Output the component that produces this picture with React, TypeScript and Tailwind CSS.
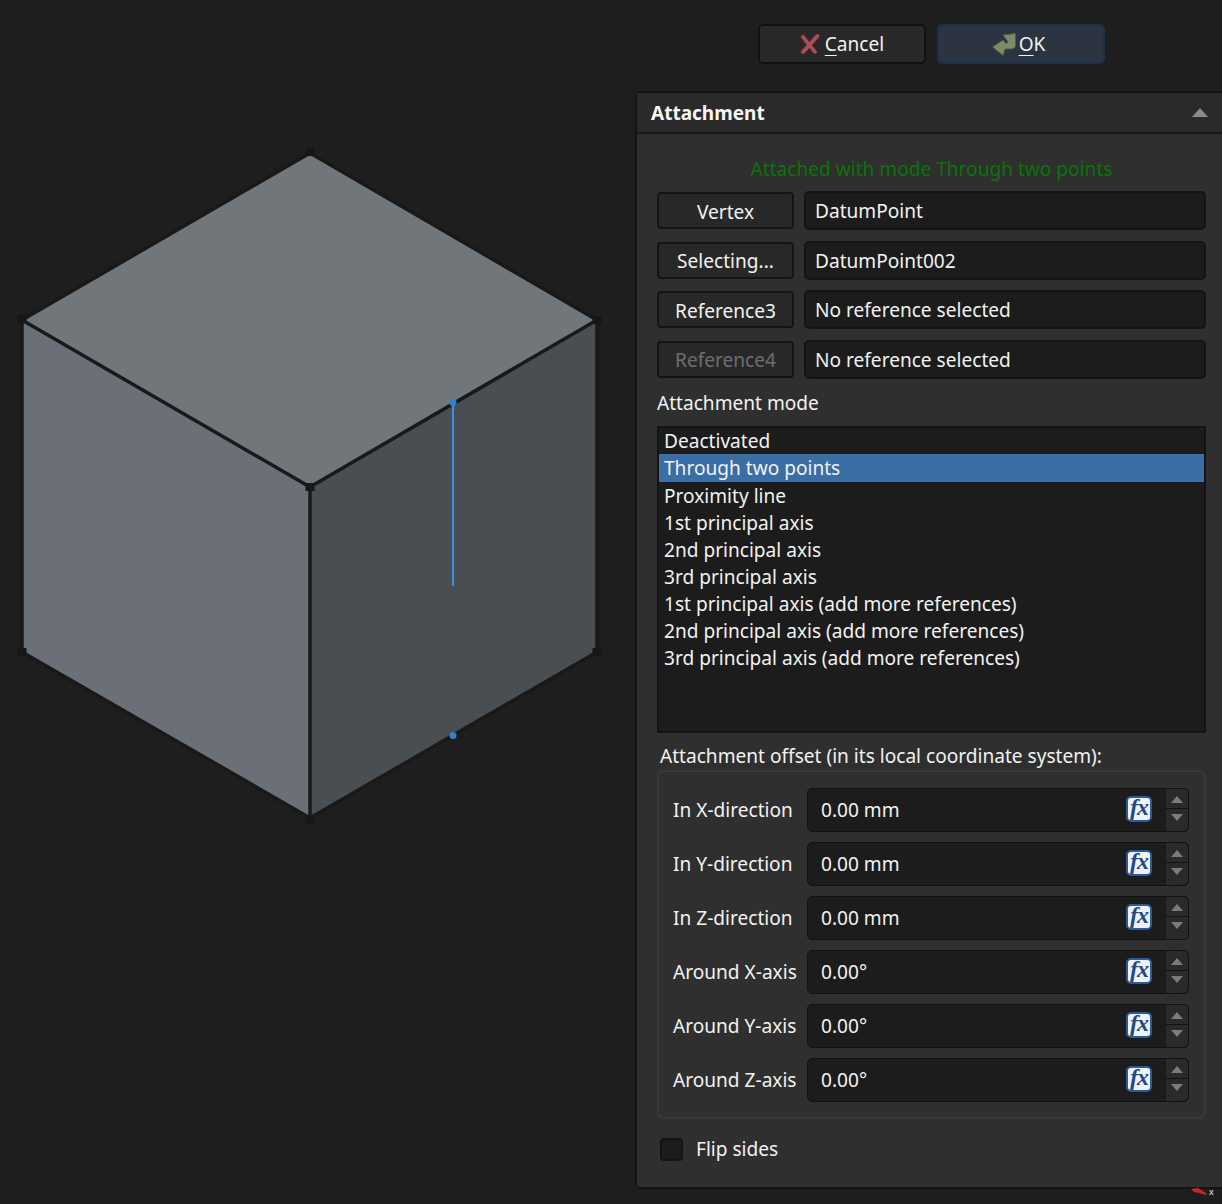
import React from 'react';

const font = { fontFamily: '"Noto Sans", sans-serif' };

const refs = [
  { label: 'Vertex', value: 'DatumPoint' },
  { label: 'Selecting...', value: 'DatumPoint002' },
  { label: 'Reference3', value: 'No reference selected' },
  { label: 'Reference4', value: 'No reference selected', disabled: true },
];

const modes = [
  'Deactivated',
  'Through two points',
  'Proximity line',
  '1st principal axis',
  '2nd principal axis',
  '3rd principal axis',
  '1st principal axis (add more references)',
  '2nd principal axis (add more references)',
  '3rd principal axis (add more references)',
];

const offsets = [
  { label: 'In X-direction', value: '0.00 mm' },
  { label: 'In Y-direction', value: '0.00 mm' },
  { label: 'In Z-direction', value: '0.00 mm' },
  { label: 'Around X-axis', value: '0.00°' },
  { label: 'Around Y-axis', value: '0.00°' },
  { label: 'Around Z-axis', value: '0.00°' },
];

const corners = [
  [310, 152], [597, 320], [22, 319], [310, 487], [310, 820], [22, 652], [597, 652],
];

function Cube() {
  return (
    <svg width="635" height="1204" viewBox="0 0 635 1204" className="block">
      <polygon points="310,153 597,320 310,487 22,320" fill="#70767a" />
      <polygon points="22,320 310,487 310,818 22,652" fill="#6a6f78" />
      <polygon points="310,487 597,320 597,652 310,818" fill="#494e53" />
      <g stroke="#191919" strokeWidth="3.5" fill="none">
        <polygon points="310,153 597,320 597,652 310,818 22,652 22,320" />
        <line x1="22" y1="320" x2="310" y2="487" />
        <line x1="310" y1="487" x2="597" y2="320" />
        <line x1="310" y1="487" x2="310" y2="818" />
      </g>
      {corners.map(([x, y]) => (
        <rect key={`${x}-${y}`} x={x - 4.5} y={y - 4} width="9" height="8" fill="#171717" />
      ))}
      <line x1="453" y1="403" x2="453" y2="586" stroke="#3d8fe6" strokeWidth="2" />
      <circle cx="453" cy="402.5" r="3.5" fill="#2f80d0" />
      <circle cx="453" cy="735.5" r="3.5" fill="#2f80d0" />
    </svg>
  );
}

function CancelIcon() {
  return (
    <svg width="20" height="20" viewBox="0 0 20 20" className="shrink-0">
      <g fill="none" strokeLinecap="round">
        <path d="M3 3 L15 18 M17.5 2 L3 18" stroke="#5e2b33" strokeWidth="5" />
        <path d="M3 3 L15 18 M17.5 2 L3 18" stroke="#a8505c" strokeWidth="3.4" />
      </g>
    </svg>
  );
}

function OkIcon() {
  return (
    <svg width="24" height="23" viewBox="0 0 24 23" className="shrink-0">
      <path d="M11 2 L23.5 0.5 V12 Q23.5 16 19 16 H13 L11 22.5 L0.5 14 L11 7 L14 10.5 L16 9 Z" fill="#7b8c66" stroke="#515c45" strokeWidth="1" strokeLinejoin="round" />
    </svg>
  );
}

function FxIcon() {
  return (
    <div className="w-[26px] h-[26px] -mt-[2px] rounded-[5px] border-2 border-[#2c5a9c] bg-[#eef1f6] flex items-center justify-center">
      <span className="text-[#1f4a85] text-[24px] font-bold italic leading-none tracking-[-1px] -mt-[3px]" style={{ fontFamily: '"Liberation Serif", serif' }}>
        fx
      </span>
    </div>
  );
}

function Arrow({ down }: { down?: boolean }) {
  return (
    <svg width="12" height="7" viewBox="0 0 12 7">
      <polygon points={down ? '0,0 12,0 6,7' : '6,0 12,7 0,7'} fill="#7b7b7b" />
    </svg>
  );
}

function OffsetRow({ label, value }: { label: string; value: string }) {
  return (
    <div className="flex items-center h-[44px] mb-[10px] last:mb-0">
      <div className="w-[134px] text-[19.1px] leading-none text-[#f2f2f2] mt-[2px]">{label}</div>
      <div className="w-[382px] h-full flex rounded-[5px] border border-[#121212] bg-[#1c1c1c]">
        <div className="flex-1 flex items-center pl-[13px] pr-[13px] justify-between">
          <span className="text-[19.1px] leading-none text-[#f2f2f2] pt-[2px]">{value}</span>
          <FxIcon />
        </div>
        <div className="w-[23px] flex flex-col bg-[#2a2a2a] border-l border-[#1a1a1a] rounded-r-[5px]">
          <div className="flex-1 flex items-center justify-center border-b border-[#121212] pt-[2px]">
            <Arrow />
          </div>
          <div className="flex-1 flex items-center justify-center pb-[5px]">
            <Arrow down />
          </div>
        </div>
      </div>
    </div>
  );
}

export default function App() {
  return (
    <div className="w-[1222px] h-[1204px] bg-[#1e1e1e] flex overflow-hidden relative" style={font}>
      <div className="w-[635px] shrink-0">
        <Cube />
      </div>

      <div className="flex-1 flex flex-col">
        <div className="flex pt-[24px] pl-[123px] gap-[11px] h-[91px] shrink-0">
          <button className="w-[168px] h-[40px] rounded-[5px] border-2 border-[#111111] bg-[#282828] flex items-center justify-center gap-[5px] text-[19.1px] text-[#f2f2f2]">
            <CancelIcon />
            <span><span className="underline underline-offset-[4px]">C</span>ancel</span>
          </button>
          <button className="w-[168px] h-[40px] rounded-[5px] border-2 border-[#1f3148] bg-[#2b3440] flex items-center justify-center gap-[3px] pr-[5px] text-[19.1px] text-[#f2f2f2]">
            <OkIcon />
            <span><span className="underline underline-offset-[4px]">O</span>K</span>
          </button>
        </div>

        <div className="h-[1098px] shrink-0 bg-[#2f2f2f] border-l-2 border-t-2 border-b-2 border-[#141414] rounded-tl-[5px] rounded-bl-[5px] flex flex-col">
          <div className="h-[41px] shrink-0 bg-[#2a2a2a] border-b-2 border-[#181818] flex items-center justify-between pl-[14px] pr-[14px]">
            <span className="text-[19px] font-bold text-[#f7f7f7] mt-[1px]">Attachment</span>
            <svg width="16" height="9" viewBox="0 0 16 9">
              <polygon points="8,0 16,9 0,9" fill="#8a8a8a" />
            </svg>
          </div>

          <div className="flex-1 flex flex-col pl-[20px] pr-[16px]">
            <div className="text-center text-[19.1px] leading-[26px] text-[#0a730a] pt-[22px] mb-[9px]">
              Attached with mode Through two points
            </div>

            {refs.map((r) => (
              <div key={r.value + r.label} className="flex items-center gap-[10px] h-[39px] mb-[10.5px]">
                <button className={`w-[137px] h-[37px] rounded-[4px] border-2 border-[#141414] bg-[#282828] pt-[3px] text-[19.1px] ${r.disabled ? 'text-[#6e6e6e]' : 'text-[#f2f2f2]'}`}>
                  {r.label}
                </button>
                <div className="flex-1 h-full flex items-center rounded-[5px] border-2 border-[#141414] bg-[#1c1c1c] pl-[9px] pt-[2px] text-[19.1px] text-[#f2f2f2]">
                  {r.value}
                </div>
              </div>
            ))}

            <div className="text-[19.1px] leading-[26px] text-[#f2f2f2] mt-[0.5px] mb-[10px]">Attachment mode</div>

            <div className="h-[307px] shrink-0 border-2 border-[#141414] bg-[#1c1c1c] text-[19.1px] text-[#f2f2f2]">
              {modes.map((m, i) => (
                <div
                  key={m}
                  className={`pl-[5px] ${i === 0 ? 'h-[26px] leading-[26px]' : i === 1 ? 'h-[28px] leading-[28px] bg-[#3a6ea5]' : 'h-[27px] leading-[28px]'}`}
                >
                  {m}
                </div>
              ))}
            </div>

            <div className="text-[19.1px] leading-[26px] text-[#f2f2f2] mt-[10px] mb-[1px] pl-[3px]">
              Attachment offset (in its local coordinate system):
            </div>

            <div className="h-[349px] shrink-0 rounded-[7px] border-2 border-[#383838] pt-[16px] pl-[14px]">
              {offsets.map((o) => (
                <OffsetRow key={o.label} label={o.label} value={o.value} />
              ))}
            </div>

            <div className="flex items-center gap-[13px] pl-[3px] mt-[18px]">
              <div className="w-[23px] h-[23px] rounded-[4px] border-2 border-[#141414] bg-[#1c1c1c]" />
              <span className="text-[19.1px] leading-[26px] text-[#f2f2f2] -mt-[1px]">Flip sides</span>
            </div>
          </div>
        </div>
      </div>

      <div className="absolute left-[1191px] top-[1187px] flex items-center">
        <svg width="17" height="8" viewBox="0 0 17 8">
          <polygon points="0,1 7,0 12,3 16,6 15,7 8,5 3,4" fill="#c4262a" />
        </svg>
        <span className="text-[9px] leading-none text-[#e8e8e8] ml-[1px]">x</span>
      </div>
    </div>
  );
}
